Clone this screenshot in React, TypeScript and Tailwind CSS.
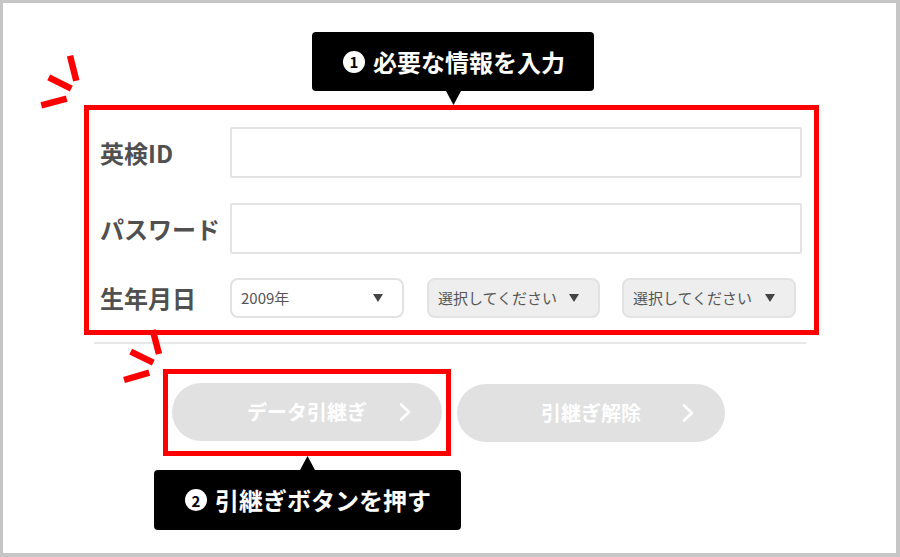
// Eiken data transfer — annotated form screenshot
import React from "react";

const FONT = "font-['Noto_Sans_CJK_JP','Noto_Sans',sans-serif]";

function Badge({ n }: { n: string }) {
  return (
    <span className="flex items-center justify-center w-[22px] h-[22px] rounded-full bg-white text-black text-[15px] font-bold leading-none">
      {n}
    </span>
  );
}

function Callout({ n, text, arrow, arrowLeft, className }: { n: string; text: string; arrow: "up" | "down"; arrowLeft: string; className: string }) {
  return (
    <div className={`relative flex items-center gap-[8px] bg-black rounded-[4px] text-white text-[24px] font-bold leading-none pl-[31px] ${className}`}>
      <Badge n={n} />
      <span>{text}</span>
      {arrow === "down" ? (
        <svg className={`absolute top-full ${arrowLeft}`} width="15" height="14" viewBox="0 0 15 14">
          <polygon points="0,0 15,0 7.5,14" fill="#000" />
        </svg>
      ) : (
        <svg className={`absolute bottom-full ${arrowLeft}`} width="15" height="14" viewBox="0 0 15 14">
          <polygon points="0,14 15,14 7.5,0" fill="#000" />
        </svg>
      )}
    </div>
  );
}

function Caret() {
  return (
    <svg width="10" height="8" viewBox="0 0 10 8">
      <polygon points="0,0 10,0 5,8" fill="#444" />
    </svg>
  );
}

function Select({ label, gray, width }: { label: string; gray?: boolean; width: string }) {
  return (
    <div
      className={`flex items-center justify-between h-[40px] ${width} pl-[9px] pr-[19px] rounded-[8px] border-2 border-[#e2e2e2] text-[15px] text-[#555] ${
        gray ? "bg-[#eeeeee]" : "bg-white"
      }`}
    >
      <span>{label}</span>
      <Caret />
    </div>
  );
}

function Chevron() {
  return (
    <svg width="13" height="19" viewBox="0 0 13 19" className="absolute right-[30px] top-1/2 -translate-y-1/2">
      <polyline points="2,2 10,9.5 2,17" fill="none" stroke="#fff" strokeWidth="2.6" strokeLinecap="round" strokeLinejoin="round" />
    </svg>
  );
}

function PillButton({ label, width }: { label: string; width: string }) {
  return (
    <div className={`relative flex items-center justify-center h-[58px] ${width} rounded-full bg-[#e1e1e1] text-white text-[20px] font-bold`}>
      {label}
      <Chevron />
    </div>
  );
}

const marks: [number, number, number, number][] = [
  [70, 55.7, 76.3, 80.7],
  [48.7, 77.3, 71.3, 88.7],
  [41.3, 105.3, 66.7, 98.7],
  [152.7, 330, 159, 354],
  [130.7, 351.7, 153.3, 362.7],
  [124, 380, 149.3, 372.7],
];

export default function App() {
  return (
    <div
      className={`relative w-[900px] h-[557px] bg-white border-[#c6c6c6] border-t-[3px] border-l-[3px] border-r-[4px] border-b-[4px] ${FONT}`}
    >
      {/* red emphasis strokes */}
      <svg className="absolute -left-[3px] -top-[3px] pointer-events-none" width="900" height="557" viewBox="0 0 900 557">
        {marks.map(([x1, y1, x2, y2], i) => (
          <line key={i} x1={x1} y1={y1} x2={x2} y2={y2} stroke="#ff0000" strokeWidth="6.5" />
        ))}
      </svg>

      <div className="pt-[29px] pl-[309px]">
        <Callout n="1" text="必要な情報を入力" arrow="down" arrowLeft="left-[134px]" className="w-[282px] h-[59px]" />
      </div>

      {/* form */}
      <div className="ml-[81px] mt-[14px] w-[735px] h-[230px] border-[5px] border-[#ff0000] pl-[11px] pr-[12px] pt-[17px] text-[#505050]">
        <div className="flex items-center h-[51px]">
          <div className="w-[130px] text-[24px] font-bold">英検ID</div>
          <div className="flex-1 h-full border-2 border-[#e3e3e3] rounded-[2px]" />
        </div>
        <div className="flex items-center h-[51px] mt-[25px]">
          <div className="w-[130px] text-[24px] font-bold whitespace-nowrap">パスワード</div>
          <div className="flex-1 h-full border-2 border-[#e3e3e3] rounded-[2px]" />
        </div>
        <div className="flex items-center h-[40px] mt-[24px]">
          <div className="w-[130px] text-[24px] font-bold">生年月日</div>
          <Select label="2009年" width="w-[174px]" />
          <div className="ml-[23px]">
            <Select label="選択してください" gray width="w-[173px]" />
          </div>
          <div className="ml-[22px]">
            <Select label="選択してください" gray width="w-[174px]" />
          </div>
        </div>
      </div>

      <div className="ml-[91px] mt-[7px] w-[712px] h-[2px] bg-[#e8e8e8]" />

      <div className="flex items-center ml-[160px] mt-[25px]">
        <div className="border-[5px] border-[#ff0000] pt-[9px] pb-[10px] px-[4px]">
          <PillButton label="データ引継ぎ" width="w-[270px]" />
        </div>
        <div className="ml-[6px]">
          <PillButton label="引継ぎ解除" width="w-[268px]" />
        </div>
      </div>

      <div className="ml-[151px] mt-[14px]">
        <Callout n="2" text="引継ぎボタンを押す" arrow="up" arrowLeft="left-[146px]" className="w-[307px] h-[60px]" />
      </div>
    </div>
  );
}
